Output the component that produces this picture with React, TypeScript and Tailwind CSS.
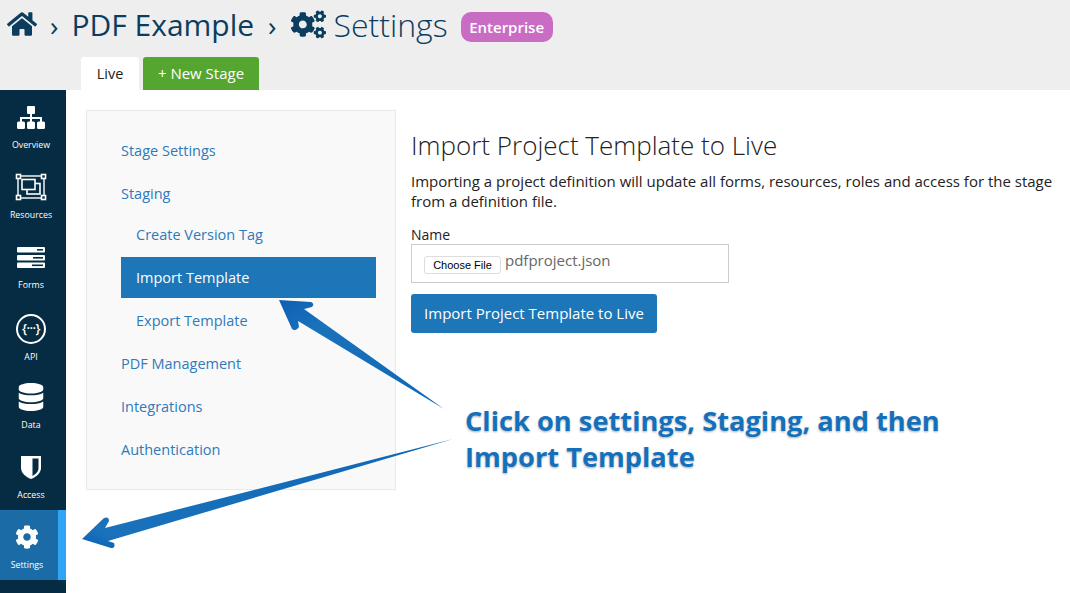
import { FaCog, FaCogs, FaDatabase, FaHome } from "react-icons/fa";
import type { ReactNode } from "react";

const font = "font-['Open_Sans',sans-serif]";

function OverviewIcon() {
  return (
    <svg width="28" height="23" viewBox="0 0 28 23" fill="white">
      <rect x="10" y="0" width="8" height="8" rx="1" />
      <rect x="13" y="8" width="2" height="8" />
      <rect x="3" y="11" width="22" height="2" />
      <rect x="3" y="11" width="2" height="5" />
      <rect x="23" y="11" width="2" height="5" />
      <rect x="0" y="15.5" width="8" height="7.5" rx="1.5" />
      <rect x="10" y="15.5" width="8" height="7.5" rx="1.5" />
      <rect x="20" y="15.5" width="8" height="7.5" rx="1.5" />
    </svg>
  );
}

function ResourcesIcon() {
  return (
    <svg width="32" height="28" viewBox="0 0 32 28" fill="none" stroke="white" strokeWidth="1.6">
      <rect x="3" y="3" width="26" height="22" strokeWidth="1.4" />
      <rect x="1.5" y="1.5" width="4" height="4" fill="#052c42" />
      <rect x="26.5" y="1.5" width="4" height="4" fill="#052c42" />
      <rect x="1.5" y="22.5" width="4" height="4" fill="#052c42" />
      <rect x="26.5" y="22.5" width="4" height="4" fill="#052c42" />
      <rect x="12" y="10.5" width="13" height="10.5" />
      <rect x="7" y="6.5" width="13" height="10" fill="#052c42" />
    </svg>
  );
}

function FormsIcon() {
  return (
    <svg width="28" height="21" viewBox="0 0 28 21">
      {[
        { y: 0, x: 20, w: 6 },
        { y: 8, x: 16, w: 10 },
        { y: 15.5, x: 15, w: 11 },
      ].map((bar) => (
        <g key={bar.y}>
          <rect x="0" y={bar.y} width="28" height="5.5" rx="1" fill="white" />
          <rect x={bar.x} y={bar.y + 2} width={bar.w} height="1.6" fill="#052c42" />
        </g>
      ))}
    </svg>
  );
}

function ApiIcon() {
  return (
    <div className="flex h-[30px] w-[30px] items-center justify-center rounded-full border-2 border-white pb-[2px] text-[13px] font-semibold leading-none tracking-[-0.5px] text-white">
      {"{···}"}
    </div>
  );
}

function AccessIcon() {
  return (
    <svg width="20" height="24" viewBox="0 0 20 24">
      <path d="M0 1 H20 V13 C20 18 15 22 10 24 C5 22 0 18 0 13 Z" fill="white" />
      <path d="M11.5 3.5 H17.5 V13 C17.5 16.5 14.5 19.5 11.5 21 Z" fill="#052c42" />
    </svg>
  );
}

function NavItem({ icon, label, active, tall }: { icon: ReactNode; label: string; active?: boolean; tall?: boolean }) {
  return (
    <div className={`flex h-[70px] flex-col pr-[4px] ${active ? "border-r-[8px] border-[#2fa6f5] bg-[#1b6ca6]" : ""}`}>
      <div className={`flex items-center justify-center text-white ${tall ? "h-[50px] pt-[8px]" : "h-[48px] pt-[6px]"}`}>{icon}</div>
      <div className="whitespace-nowrap text-center text-[8.8px] leading-[14px] text-white">{label}</div>
    </div>
  );
}

function MenuLink({ label, sub, active }: { label: string; sub?: boolean; active?: boolean }) {
  return (
    <div className="flex h-[43px] items-center">
      <div
        className={`flex w-full items-center text-[14.5px] ${sub ? "pl-[15px]" : ""} ${
          active ? "h-[41px] bg-[#1c76b8] text-white" : "text-[#2f7abb]"
        }`}
      >
        {label}
      </div>
    </div>
  );
}

function Arrows() {
  return (
    <svg className="absolute left-0 top-0" width="1070" height="593" viewBox="0 0 1070 593">
      <defs>
        <linearGradient id="arrow-a" x1="0" y1="0" x2="1" y2="1">
          <stop offset="0" stopColor="#0d5fb4" />
          <stop offset="0.25" stopColor="#1a72bb" />
          <stop offset="1" stopColor="#0f66b5" />
        </linearGradient>
        <linearGradient id="arrow-b" x1="0" y1="1" x2="1" y2="0">
          <stop offset="0" stopColor="#0d5fb4" />
          <stop offset="0.1" stopColor="#1a72bb" />
          <stop offset="1" stopColor="#0f66b5" />
        </linearGradient>
      </defs>
      <path
        d="M279 300 L311 302 Q315 304 312 307 L304 309 L444 409 L298 321 L299 327 Q296 332 292 329 Z"
        fill="url(#arrow-a)"
      />
      <path
        d="M82 539 L104 518 Q109 516 109 521 L105 528 L453 439 L108 541 L114 543 Q116 548 111 548 Z"
        fill="url(#arrow-b)"
      />
    </svg>
  );
}

export default function App() {
  return (
    <div className={`relative h-[593px] w-[1070px] overflow-hidden bg-white ${font}`}>
      <header className="h-[90px] bg-[#eeeeee] text-[#0b3d5f]">
        <div className="flex h-[57px] items-start pl-[7px]">
          <FaHome className="mt-[10px] h-[28px] w-[30px] text-[#0b3d5f]" />
          <span className="ml-[13px] mt-[8px] text-[28px] leading-[34px]">›</span>
          <span className="ml-[13px] mt-[5px] text-[30px] leading-[40px]">PDF Example</span>
          <span className="ml-[14px] mt-[8px] text-[28px] leading-[34px]">›</span>
          <FaCogs className="ml-[14px] mt-[8px] h-[33px] w-[35px]" />
          <span className="ml-[8px] mt-[4px] text-[32px] font-light leading-[42px]">Settings</span>
          <span className="ml-[13px] mt-[12px] flex h-[30px] w-[92px] items-center justify-center rounded-[10px] bg-[#c96cc3] text-[15px] font-semibold text-white">
            Enterprise
          </span>
        </div>
        <div className="flex h-[33px] gap-[4px] pl-[81px]">
          <div className="flex w-[58px] items-center justify-center rounded-t-[3px] bg-white text-[14.5px] text-[#222222]">Live</div>
          <div className="flex w-[116px] items-center justify-center rounded-t-[3px] bg-[#55a630] text-[15px] font-medium text-white">
            + New Stage
          </div>
        </div>
      </header>

      <div className="flex h-[503px]">
        <nav className="w-[66px] shrink-0 bg-[#052c42]">
          <NavItem icon={<OverviewIcon />} label="Overview" />
          <NavItem icon={<ResourcesIcon />} label="Resources" />
          <NavItem icon={<FormsIcon />} label="Forms" />
          <NavItem icon={<ApiIcon />} label="API" tall />
          <NavItem icon={<FaDatabase size={28} />} label="Data" />
          <NavItem icon={<AccessIcon />} label="Access" />
          <NavItem icon={<FaCog size={24} />} label="Settings" active />
        </nav>

        <div className="flex items-start pl-[20px] pt-[20px]">
          <aside className="h-[380px] w-[310px] border border-[#e8e8e8] bg-[#f9f9f9] pl-[34px] pr-[19px] pt-[18px]">
            <MenuLink label="Stage Settings" />
            <MenuLink label="Staging" />
            <div className="-mt-[2px]">
              <MenuLink label="Create Version Tag" sub />
            </div>
            <MenuLink label="Import Template" sub active />
            <MenuLink label="Export Template" sub />
            <MenuLink label="PDF Management" />
            <MenuLink label="Integrations" />
            <MenuLink label="Authentication" />
          </aside>

          <main className="ml-[15px] w-[650px]">
            <h1 className="mt-[19px] text-[26px] font-light leading-[32px] text-[#222222]">Import Project Template to Live</h1>
            <p className="mt-[10px] text-[15px] leading-[20px] text-[#222222]">
              Importing a project definition will update all forms, resources, roles and access for the stage from a definition file.
            </p>
            <label className="mt-[15px] block text-[14px] leading-[18px] text-[#222222]">Name</label>
            <div className="flex h-[39px] w-[318px] items-start border border-[#cccccc] pl-[12px]">
              <button className="mt-[11px] h-[18px] w-[77px] rounded-[3px] border border-[#dddddd] bg-white font-['Liberation_Sans',sans-serif] text-[11px] leading-none text-black">
                Choose File
              </button>
              <span className="ml-[4px] mt-[5px] text-[15px] leading-[20px] text-[#666666]">pdfproject.json</span>
            </div>
            <button className="mt-[11px] h-[39px] w-[246px] rounded-[3px] bg-[#1c76b8] text-[15px] font-medium text-white">
              Import Project Template to Live
            </button>
          </main>
        </div>
      </div>

      <Arrows />
      <div className="absolute left-[465px] top-[403px] whitespace-nowrap text-[27.25px] font-bold leading-[36px] text-[#1470bb] [text-shadow:0_0_2px_#fff,0_1px_2px_#9a9a9a]">
        Click on settings, Staging, and then
        <br />
        Import Template
      </div>
    </div>
  );
}
